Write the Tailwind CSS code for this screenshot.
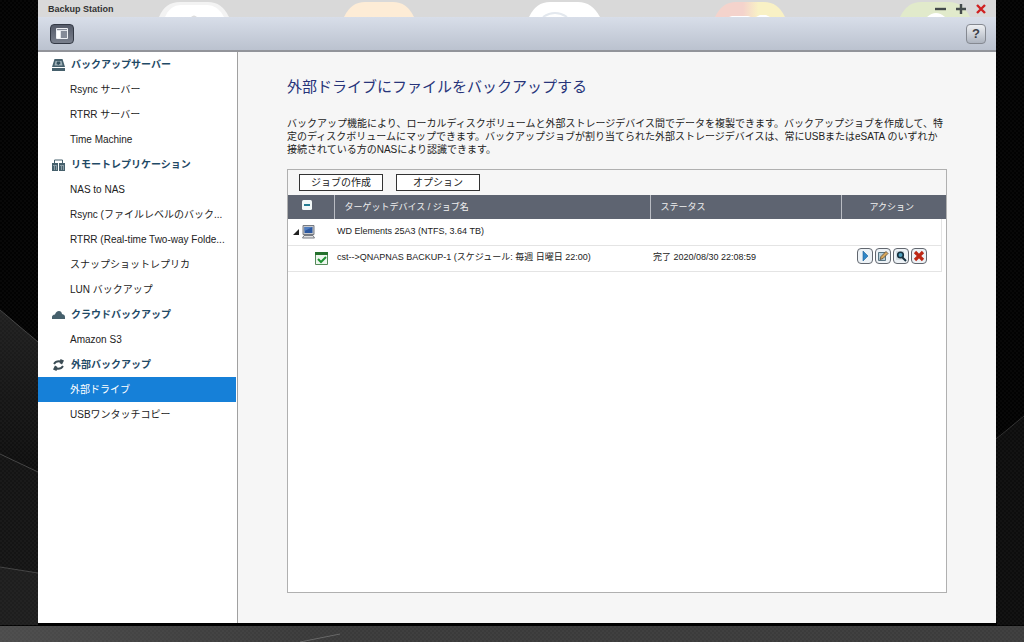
<!DOCTYPE html>
<html lang="ja">
<head>
<meta charset="utf-8">
<meta name="viewport" content="width=device-width, initial-scale=1">
<title>Backup Station</title>
<script src="https://cdn.jsdelivr.net/npm/@tailwindcss/browser@4"></script>
</head>
<body class="relative flex h-screen min-h-[400px] flex-col overflow-hidden bg-black font-['Liberation_Sans','Noto_Sans_CJK_JP',sans-serif] text-[10px] text-[#222]">

<!-- Desktop wallpaper -->
<svg class="absolute inset-0 h-full w-full" viewBox="0 0 1024 642" preserveAspectRatio="none" aria-hidden="true">
  <defs>
    <pattern id="weave" width="4" height="4" patternUnits="userSpaceOnUse"><path d="M0 0h2v2H0zM2 2h2v2H2z" fill="#fff" opacity=".025"/></pattern>
    <linearGradient id="facet" x1="0" y1="0" x2="0" y2="1"><stop offset="0" stop-color="#202020"/><stop offset="1" stop-color="#0e0e0e"/></linearGradient>
    <linearGradient id="floor" x1="0" y1="0" x2="1" y2="0"><stop offset="0" stop-color="#4c4c4c"/><stop offset=".3" stop-color="#3a3a3a"/><stop offset="1" stop-color="#3c3c3c"/></linearGradient>
  </defs>
  <path d="M0 0h1024v642H0z" fill="#020202"/>
  <path d="M0 310L38 342V472L0 454z" fill="url(#facet)"/>
  <path d="M0 454L38 472V573L0 567z" fill="#141414"/>
  <path d="M0 567L38 573V625H0z" fill="#1e1e1e"/>
  <path d="M0 310L38 342M0 454L38 472M0 567L38 573" stroke="#444" fill="none"/>
  <path d="M996 439L1024 416V625H996z" fill="#0d0d0d"/>
  <path d="M996 439L1024 416" stroke="#303030"/>
  <path d="M0 0h1024v642H0z" fill="url(#weave)"/>
  <path d="M38 622h959v4H38z" fill="#000"/>
  <path d="M0 626h1024v16H0z" fill="url(#floor)"/>
  <path d="M300 642L340 634" stroke="#666"/>
  <path d="M0 626h1024v16H0z" fill="url(#weave)"/>
</svg>

<div class="relative mr-7 mb-[19px] ml-[38px] flex min-h-0 flex-1 flex-col bg-[#f6f6f6]">

  <header>
    <div class="relative flex h-[17px] items-center justify-between overflow-hidden bg-[#d9d9d9] px-2.5">
      <!-- Desktop shortcuts showing through the title bar -->
      <svg class="absolute top-0 left-0" width="958" height="17" viewBox="0 0 958 17" aria-hidden="true">
        <defs>
          <linearGradient id="duo"><stop offset=".4" stop-color="#f4d3cc"/><stop offset=".62" stop-color="#f9f1c5"/></linearGradient>
        </defs>
        <path d="M121 17Q127 2 142 2h28Q184 2 191 17z" fill="#f3f3f3"/><path d="M127 17Q132 5 143 5h26Q180 5 186 17z" fill="#fff"/><path d="M153 17q3-3 6 0z" fill="#ddd"/>
        <path d="M306 17Q313 2 327 2h28Q369 2 376 17z" fill="#fdecd6"/>
        <path d="M491 17Q498 2 512 2h28Q554 2 562 17z" fill="#fff"/><path d="M505 17q12-8 24 0" fill="none" stroke="#e3e8ee" stroke-width="2"/>
        <path d="M677 17Q684 2 698 2h28Q740 2 747 17z" fill="url(#duo)"/><path d="M691 17l3-1h16l3 1zM718 17l4-2h6l4 2z" fill="#fff"/>
        <path d="M862 17Q869 2 883 2h28Q925 2 932 17z" fill="#e1eacb"/><path d="M889 17q9-8 18 0z" fill="#fff"/>
      </svg>
      <h1 class="relative text-[9px] leading-4 font-bold text-[#333]">Backup Station</h1>
      <div class="relative flex gap-2.5">
        <button type="button" aria-label="最小化"><svg width="11" height="11" viewBox="0 0 11 11"><path d="M0 6h11" stroke="#444b4b" stroke-width="2.4"/></svg></button>
        <button type="button" aria-label="最大化"><svg width="10" height="11" viewBox="0 0 10 11"><path d="M0 6h10M5 1v10" stroke="#444b4b" stroke-width="2.4"/></svg></button>
        <button type="button" aria-label="閉じる"><svg width="10" height="11" viewBox="0 0 10 11"><path d="M1 2l8 8M9 2l-8 8" stroke="#cf2020" stroke-width="2.4"/></svg></button>
      </div>
    </div>
    <div class="flex h-[35px] items-center justify-between border-b-2 border-[#92949a] bg-linear-to-b from-[#d8dee9] to-[#bbc2cf] pr-2.5 pl-3">
      <button type="button" aria-label="メニュー" class="flex h-5 w-6 items-center justify-center rounded border border-[#333945] bg-linear-to-b from-[#555b69] to-[#7a808d]">
        <svg width="12" height="11" viewBox="0 0 12 11"><path d="M.5.5h11v10H.5z" fill="#858b98" stroke="#eef0f4"/><path d="M1 3h3v7H1z" fill="#fff"/><path d="M1 2.500h10M4.500 3v7" stroke="#dfe2e8"/></svg>
      </button>
      <button type="button" aria-label="ヘルプ" class="h-5 w-5 rounded border border-[#858991] bg-linear-to-b from-[#eef0f3] to-[#aeb4bf] text-[13px] leading-4 font-bold text-[#3c4048]">?</button>
    </div>
  </header>

  <div class="flex min-h-0 flex-1">
    <nav class="w-[200px] shrink-0 border-r border-[#a0a0a0] bg-white leading-[25px] whitespace-nowrap text-[#222]">
      <h2 class="flex items-center gap-1.5 pl-3.5 font-bold text-[#1f4a66]">
        <svg width="13" height="12" viewBox="0 0 13 12" fill="#46606c"><path d="M2.500 0h8L13 8H0z"/><path d="M0 9h13v3H0z"/><path d="M3.500 2h6l1 4.500h-8z" fill="#9fb0b8"/><path d="M5 2.500h3l.5 2-2 1.500-2-1z" fill="#34505d"/></svg>
        バックアップサーバー
      </h2>
      <ul>
        <li><a href="#" class="block pl-8">Rsync サーバー</a></li>
        <li><a href="#" class="block pl-8">RTRR サーバー</a></li>
        <li><a href="#" class="block pl-8">Time Machine</a></li>
      </ul>
      <h2 class="flex items-center gap-1.5 pl-3.5 font-bold text-[#1f4a66]">
        <svg width="13" height="12" viewBox="0 0 13 12" fill="#46606c"><path d="M2.500 4V1h8v3" fill="none" stroke="#46606c"/><path d="M0 4h6v8H0zM7 4h6v8H7z"/><path d="M1 6.500h4M8 6.500h4M2.500 7v4M4.500 7v4M9.500 7v4M11.500 7v4" stroke="#a9b8bf" stroke-width=".7"/></svg>
        リモートレプリケーション
      </h2>
      <ul>
        <li><a href="#" class="block pl-8">NAS to NAS</a></li>
        <li><a href="#" class="block pl-8">Rsync (ファイルレベルのバック...</a></li>
        <li><a href="#" class="block pl-8">RTRR (Real-time Two-way Folde...</a></li>
        <li><a href="#" class="block pl-8">スナップショットレプリカ</a></li>
        <li><a href="#" class="block pl-8">LUN バックアップ</a></li>
      </ul>
      <h2 class="flex items-center gap-1.5 pl-3.5 font-bold text-[#1f4a66]">
        <svg width="13" height="12" viewBox="0 0 13 12" fill="#46606c"><path d="M0 10V8q0-2 3-2.500Q4 2 7 2q2.500 0 3 3 3 .5 3 3v2z"/></svg>
        クラウドバックアップ
      </h2>
      <ul>
        <li><a href="#" class="block pl-8">Amazon S3</a></li>
      </ul>
      <h2 class="flex items-center gap-1.5 pl-3.5 font-bold text-[#1f4a66]">
        <svg width="13" height="12" viewBox="0 0 13 12"><path d="M2 5q2-3.500 7-2.500M11 7q-2 3.500-7 2.500" fill="none" stroke="#3b4c54" stroke-width="1.800"/><path d="M8.500 0L12 1.500 10 5.500 7.500 4zM4.500 12L1 10.500 3 6.500 5.500 8z" fill="#3b4c54"/></svg>
        外部バックアップ
      </h2>
      <ul>
        <li><a href="#" aria-current="page" class="mr-px block bg-[#1680d8] pl-8 text-white">外部ドライブ</a></li>
        <li><a href="#" class="block pl-8">USBワンタッチコピー</a></li>
      </ul>
    </nav>

    <main class="flex min-w-0 flex-1 flex-col px-[49px] pt-[25px] pb-[30px]">
      <h2 class="text-[15px] leading-5 text-[#27347a]">外部ドライブにファイルをバックアップする</h2>
      <p class="mt-5 pr-0.5 leading-[13px]">バックアップ機能により、ローカルディスクボリュームと外部ストレージデバイス間でデータを複製できます。バックアップジョブを作成して、特定のディスクボリュームにマップできます。バックアップジョブが割り当てられた外部ストレージデバイスは、常にUSBまたはeSATA のいずれか接続されている方のNASにより認識できます。</p>

      <section class="mt-[13px] flex min-h-0 flex-1 flex-col border border-[#b0b0b0] bg-white">
        <div class="flex h-[25px] shrink-0 items-center gap-[13px] bg-[#f6f6f6] pl-[11px]">
          <button type="button" class="h-[17px] w-[84px] border border-[#333] bg-white leading-[14px]">ジョブの作成</button>
          <button type="button" class="h-[17px] w-[84px] border border-[#333] bg-white leading-[14px]">オプション</button>
        </div>
        <table class="w-full table-fixed border-collapse text-left text-[9px]">
          <colgroup><col class="w-[46px]"><col><col class="w-[191px]"><col class="w-[100px]"><col class="w-[5px]"></colgroup>
          <thead class="bg-[#5e6471] text-[#f0f0f0]">
            <tr class="h-6">
              <th class="pl-3.5 font-normal"><button type="button" aria-label="すべて折りたたむ" class="block pb-1"><svg width="10" height="10" viewBox="0 0 10 10"><rect width="10" height="10" rx="1.500" fill="#f2f7f8"/><path d="M2 5h6" stroke="#237b92" stroke-width="2"/></svg></button></th>
              <th class="border-l border-[#b9bcc3] pt-0.5 pl-2.5 font-normal">ターゲットデバイス / ジョブ名</th>
              <th class="border-l border-[#b9bcc3] pt-0.5 pl-2.5 font-normal">ステータス</th>
              <th colspan="2" class="border-l border-[#b9bcc3] pt-0.5 pr-1 text-center font-normal">アクション</th>
            </tr>
          </thead>
          <tbody>
            <tr class="h-[26px]">
              <td class="border-b border-[#e4e4e4] pl-[5px]">
                <button type="button" aria-label="折りたたむ" class="flex items-center gap-[3px]">
                  <svg width="6" height="6" viewBox="0 0 6 6"><path d="M6 0v6H0z" fill="#222"/></svg>
                  <svg width="13" height="14" viewBox="0 0 13 14"><path d="M1 .5h11v9H1z" fill="#c7c9cd" stroke="#777b82"/><path d="M2.500 2h8v6h-8z" fill="#2c58a0"/><path d="M2.500 2h8L2.500 6z" fill="#517ec0"/><path d="M2 10.500h9l1.500 2.500H.5z" fill="#e2e2e2" stroke="#777b82"/></svg>
                </button>
              </td>
              <td class="border-b border-[#e4e4e4] pl-[3px]">WD Elements 25A3 (NTFS, 3.64 TB)</td>
              <td class="border-b border-[#e4e4e4]"></td>
              <td class="border-r border-b border-[#e4e4e4]"></td>
              <td></td>
            </tr>
            <tr class="h-[26px]">
              <td class="border-b border-[#e4e4e4] pl-[27px]"><svg width="13" height="13" viewBox="0 0 13 13"><path d="M.5.5h12v12H.5z" fill="#eef7ef" stroke="#548a59"/><path d="M0 0h13v3H0z" fill="#24712d"/><path d="M3 7l3 3 5-5" fill="none" stroke="#1f9333" stroke-width="2"/></svg></td>
              <td class="border-b border-[#e4e4e4] pl-[3px]">cst--&gt;QNAPNAS BACKUP-1 (スケジュール: 毎週 日曜日 22:00)</td>
              <td class="border-b border-[#e4e4e4] pl-[3px]">完了 2020/08/30 22:08:59</td>
              <td class="border-r border-b border-[#e4e4e4] pl-4">
                <div class="flex gap-0.5 pb-1">
                  <button type="button" aria-label="開始" class="flex h-4 w-4 shrink-0 items-center justify-center rounded border border-[#62676f] bg-[#edf2f6]"><svg width="12" height="12" viewBox="0 0 12 12"><path d="M4 1l5 5-5 5z" fill="#2f86c6" stroke="#1c6099" stroke-width=".6"/></svg></button>
                  <button type="button" aria-label="編集" class="flex h-4 w-4 shrink-0 items-center justify-center rounded border border-[#62676f] bg-[#edf2f6]"><svg width="12" height="12" viewBox="0 0 12 12"><path d="M1.500 2.500h7v8h-7z" fill="#b8cfd8" stroke="#587482"/><path d="M3 9.500l1-3 5-5L11 3.500l-5 5z" fill="#d9a85c" stroke="#574734" stroke-width=".8"/></svg></button>
                  <button type="button" aria-label="表示" class="flex h-4 w-4 shrink-0 items-center justify-center rounded border border-[#62676f] bg-[#edf2f6]"><svg width="12" height="12" viewBox="0 0 12 12"><path d="M1 1h8v9H1z" fill="#d2dce2"/><circle cx="5.500" cy="5" r="2.800" fill="#4d9dbb" stroke="#16303f" stroke-width="1.600"/><path d="M7.500 7.500L11 11" stroke="#16303f" stroke-width="2"/></svg></button>
                  <button type="button" aria-label="削除" class="flex h-4 w-4 shrink-0 items-center justify-center rounded border border-[#62676f] bg-[#edf2f6]"><svg width="12" height="12" viewBox="0 0 12 12"><path d="M2 2l8 8M10 2l-8 8" stroke="#bd2715" stroke-width="3.200"/></svg></button>
                </div>
              </td>
              <td></td>
            </tr>
          </tbody>
        </table>
      </section>
    </main>
  </div>
</div>
</body>
</html>
